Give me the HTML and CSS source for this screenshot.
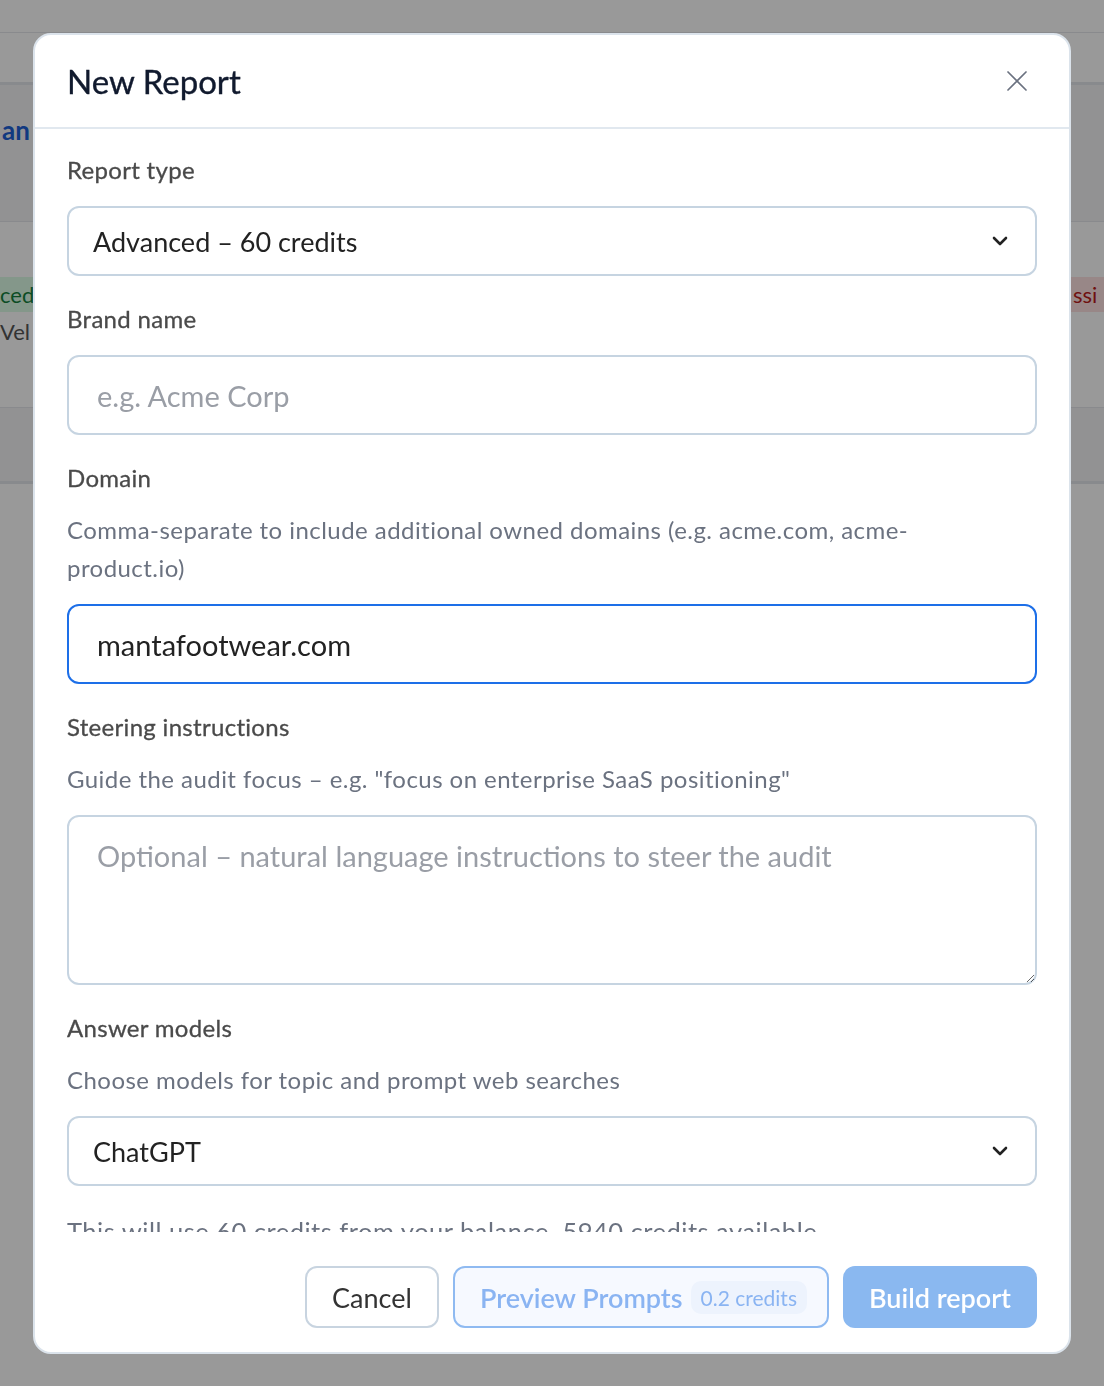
FILE: index.html
```html
<!DOCTYPE html>
<html lang="en">
<head>
  <meta charset="UTF-8">
  <title>New Report</title>
  <link rel="stylesheet" href="styles.css">
</head>
<body>
  <!-- page behind the dialog -->
  <div class="page">
    <div class="topbar"></div>
    <div class="tabs"></div>
    <div class="hero"><span class="hero-title">an</span></div>
    <div class="row">
      <div class="row-left">
        <span class="badge badge-green">ced</span>
        <span class="row-text">Vel</span>
      </div>
      <div class="row-right">
        <span class="badge badge-red">ssi</span>
      </div>
    </div>
    <div class="row-alt"></div>
  </div>

  <div class="overlay">
    <div class="modal">
      <div class="modal-header">
        <h2 class="modal-title">New Report</h2>
        <button class="close" type="button" aria-label="Close">
          <svg width="20" height="20" viewBox="0 0 20 20" fill="none" stroke="#6b7280" stroke-width="1.7" stroke-linecap="round">
            <path d="M1 1L19 19M19 1L1 19"/>
          </svg>
        </button>
      </div>

      <div class="modal-body">
        <div class="field">
          <label class="label" for="report_type">Report type</label>
          <div class="select-wrap">
            <select id="report_type" class="control select">
              <option>Advanced – 60 credits</option>
            </select>
            <svg class="chevron" width="16" height="10" viewBox="0 0 16 10" fill="none" stroke="#222" stroke-width="2.6" stroke-linecap="round" stroke-linejoin="round">
              <path d="M2 2L8 8L14 2"/>
            </svg>
          </div>
        </div>

        <div class="field">
          <label class="label" for="brand_name">Brand name</label>
          <input id="brand_name" class="control input" type="text" placeholder="e.g. Acme Corp">
        </div>

        <div class="field">
          <label class="label" for="domain">Domain</label>
          <p class="hint hint-wrap">Comma-separate to include additional owned domains (e.g. acme.com, acme-product.io)</p>
          <input id="domain" class="control input input-focus" type="text" value="mantafootwear.com">
        </div>

        <div class="field">
          <label class="label" for="steering">Steering instructions</label>
          <p class="hint">Guide the audit focus – e.g. "focus on enterprise SaaS positioning"</p>
          <textarea id="steering" class="control textarea" placeholder="Optional – natural language instructions to steer the audit"></textarea>
        </div>

        <div class="field">
          <label class="label" for="models">Answer models</label>
          <p class="hint">Choose models for topic and prompt web searches</p>
          <div class="select-wrap">
            <select id="models" class="control select">
              <option>ChatGPT</option>
            </select>
            <svg class="chevron" width="16" height="10" viewBox="0 0 16 10" fill="none" stroke="#222" stroke-width="2.6" stroke-linecap="round" stroke-linejoin="round">
              <path d="M2 2L8 8L14 2"/>
            </svg>
          </div>
        </div>

        <p class="note">This will use 60 credits from your balance. 5940 credits available</p>
      </div>

      <div class="modal-footer">
        <button class="btn btn-cancel" type="button">Cancel</button>
        <button class="btn btn-preview" type="button">Preview Prompts <span class="btn-badge">0.2 credits</span></button>
        <button class="btn btn-primary" type="button">Build report</button>
      </div>
    </div>
  </div>
</body>
</html>
```

FILE: styles.css
```css
body {
  margin: 0;
  font-family: Lato, "Noto Sans", sans-serif;
  height: 1386px;
  overflow: hidden;
}

/* background page */
.page {
  background: #fff;
  height: 100%;
}
.topbar {
  height: 32px;
  border-bottom: 1px solid #e5e7eb;
}
.tabs {
  height: 49px;
  border-bottom: 3px solid #e3e7eb;
}
.hero {
  height: 106px;
  padding-top: 30px;
  background: #f4f4f5;
  border-bottom: 1px solid #e5e7eb;
}
.hero-title {
  display: block;
  margin-left: 2px;
  font-size: 26px;
  line-height: 30px;
  font-weight: 700;
  color: #1d5fd6;
}
.row {
  height: 130px;
  padding-top: 55px;
  border-bottom: 1px solid #e5e7eb;
  display: flex;
  justify-content: space-between;
}
.row-left {
  display: flex;
  flex-direction: column;
  align-items: flex-start;
}
.row-right {
  width: 33px;
}
.badge {
  display: block;
  height: 35px;
  line-height: 35px;
  font-size: 22px;
  white-space: nowrap;
}
.badge-green {
  background: #dcfce7;
  color: #15803d;
  width: 33px;
}
.badge-red {
  background: #fee2e2;
  color: #b91c1c;
  padding-left: 2px;
}
.row-text {
  margin-top: 5px;
  font-size: 22px;
  line-height: 30px;
  color: #555;
}
.row-alt {
  height: 73px;
  background: #f4f4f5;
  border-bottom: 3px solid #e3e7eb;
}

/* dialog */
.overlay {
  position: fixed;
  inset: 0;
  background: rgba(0, 0, 0, 0.4);
  display: flex;
  justify-content: center;
  align-items: flex-start;
  padding: 33px 33px 32px;
  box-sizing: border-box;
}
.modal {
  width: 100%;
  height: 100%;
  box-sizing: border-box;
  background: #fff;
  border: 2px solid #dbe3eb;
  border-radius: 18px;
  display: flex;
  flex-direction: column;
  overflow: hidden;
}
.modal-header {
  height: 92px;
  flex-shrink: 0;
  padding: 0 32px;
  border-bottom: 2px solid #e1e8ef;
  display: flex;
  align-items: center;
  justify-content: space-between;
}
.modal-title {
  margin: 0;
  font-size: 33px;
  font-weight: 400;
  -webkit-text-stroke: 0.35px #111a2e;
  color: #111a2e;
}
.close {
  width: 40px;
  height: 40px;
  padding: 0;
  border: 0;
  background: none;
  display: flex;
  align-items: center;
  justify-content: center;
}
.modal-body {
  flex: 1;
  overflow-y: auto;
  scrollbar-width: none;
  padding: 26px 32px 0;
}
.field {
  margin-bottom: 28px;
}
.label {
  display: block;
  font-size: 24px;
  line-height: 30px;
  letter-spacing: 0.3px;
  color: #4a4a4a;
  -webkit-text-stroke: 0.3px #4a4a4a;
  margin-bottom: 21px;
}
.hint {
  margin: -3px 0 17px;
  font-size: 24px;
  line-height: 38px;
  letter-spacing: 0.45px;
  color: #6b7280;
}
.hint-wrap {
  max-width: 950px;
}
.control {
  display: block;
  width: 100%;
  box-sizing: border-box;
  border: 2px solid #c6d4e1;
  border-radius: 12px;
  background: #fff;
  font-family: inherit;
  color: #222;
  outline: none;
}
.select-wrap {
  position: relative;
}
.select {
  height: 70px;
  padding: 0 56px 0 24px;
  font-size: 27px;
  appearance: none;
}
.chevron {
  position: absolute;
  right: 29px;
  top: 30px;
  pointer-events: none;
}
.input {
  height: 80px;
  padding: 0 28px;
  font-size: 29px;
}
.input-focus {
  border-color: #1d6fe8;
}
.textarea {
  height: 170px;
  padding: 18px 28px;
  font-size: 29px;
  line-height: 42px;
  resize: vertical;
}
.control::placeholder {
  color: #9a9ea6;
}
.note {
  margin: -2px 0 0;
  font-size: 25.5px;
  line-height: 38px;
  letter-spacing: 0.5px;
  color: #6b7280;
}

.modal-footer {
  flex-shrink: 0;
  padding: 34px 32px 24px;
  display: flex;
  justify-content: flex-end;
  gap: 14px;
}
.btn {
  height: 62px;
  padding: 0 25px;
  border-radius: 12px;
  font-family: inherit;
  font-size: 27px;
  display: flex;
  align-items: center;
  box-sizing: border-box;
}
.btn-cancel {
  background: #fff;
  border: 2px solid #c8d4e0;
  color: #333;
}
.btn-preview {
  background: #f6f9ff;
  border: 2px solid #8fbaf1;
  color: #8ab4f2;
  font-weight: 600;
  gap: 8px;
  padding-right: 20px;
}
.btn-badge {
  background: #edf3fd;
  border-radius: 10px;
  padding: 4px 10px;
  font-size: 21px;
  font-weight: 400;
}
.btn-primary {
  background: #8ab8f0;
  border: 0;
  color: #fff;
  font-weight: 600;
  padding: 0 26px;
}
```
